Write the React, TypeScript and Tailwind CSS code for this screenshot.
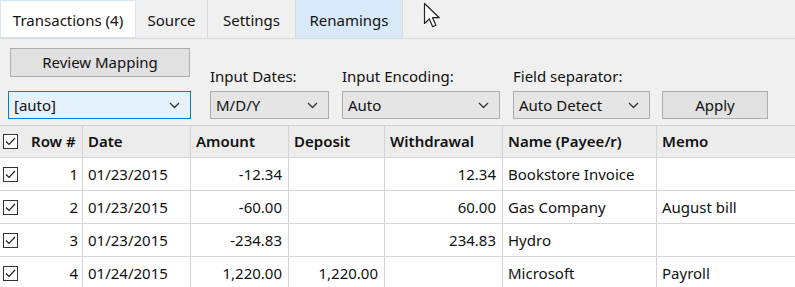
import React from "react";

const FONT = { fontFamily: '"Noto Sans", "Open Sans", Arial, sans-serif' };

const rows = [
  { n: 1, date: "01/23/2015", amount: "-12.34", deposit: "", withdrawal: "12.34", name: "Bookstore Invoice", memo: "" },
  { n: 2, date: "01/23/2015", amount: "-60.00", deposit: "", withdrawal: "60.00", name: "Gas Company", memo: "August bill" },
  { n: 3, date: "01/23/2015", amount: "-234.83", deposit: "", withdrawal: "234.83", name: "Hydro", memo: "" },
  { n: 4, date: "01/24/2015", amount: "1,220.00", deposit: "1,220.00", withdrawal: "", name: "Microsoft", memo: "Payroll" },
];

// Column widths
const COLS = "grid-cols-[83px_108px_98px_96px_118px_154px_1fr]";

const Chevron = () => (
  <svg width="11" height="7" viewBox="0 0 11 7" className="shrink-0">
    <path d="M1 1l4.5 4.5L10 1" fill="none" stroke="#333" strokeWidth="1.3" />
  </svg>
);

const Check = () => (
  <svg width="15" height="15" viewBox="0 0 15 15" className="shrink-0">
    <rect x="0.5" y="0.5" width="14" height="14" fill="#fff" stroke="#333" />
    <path d="M3 7.5l3 3 6-6.5" fill="none" stroke="#222" strokeWidth="1.2" />
  </svg>
);

const Select = ({ value, width, active }: { value: string; width: string; active?: boolean }) => (
  <div
    className={`flex items-center justify-between h-[28px] pl-[5px] pr-[10px] border text-[15px] text-[#111] ${width} ${
      active ? "bg-[#e5f1fb] border-[#0078d7]" : "bg-[#e5e5e5] border-[#acacac]"
    }`}
  >
    <span>{value}</span>
    <Chevron />
  </div>
);

const Field = ({ label, value, width }: { label: string; value: string; width: string }) => (
  <div className="flex flex-col">
    <span className="text-[15px] text-[#111] leading-[20px] mb-[5px]">{label}</span>
    <Select value={value} width={width} />
  </div>
);

const Tab = ({ label, width, kind }: { label: string; width: string; kind: "active" | "plain" | "hover" }) => (
  <div
    className={`h-full flex items-center justify-center whitespace-nowrap text-[15px] text-[#111] pt-[2px] ${width} ${
      kind === "active"
        ? "bg-white border border-[#d9e6f2]"
        : kind === "hover"
        ? "bg-[#d8eaf9] border-r border-[#dadada]"
        : "bg-[#f0f0f0] border-r border-[#dadada]"
    }`}
  >
    {label}
  </div>
);

export default function App() {
  return (
    <div className="relative w-[795px] h-[287px] overflow-hidden bg-[#f0f0f0]" style={FONT}>
      {/* Tab strip */}
      <div className="flex h-[39px] border-b border-[#d9d9d9]">
        <Tab label="Transactions (4)" width="w-[136px]" kind="active" />
        <Tab label="Source" width="w-[72px]" kind="plain" />
        <Tab label="Settings" width="w-[88px]" kind="plain" />
        <Tab label="Renamings" width="w-[107px]" kind="hover" />
      </div>

      {/* Controls */}
      <div className="flex items-end gap-[13px] pl-[8px] pt-[8px] h-[80px]">
        <div className="flex flex-col gap-[14px] w-[183px]">
          <div className="ml-[2px] w-[180px] h-[29px] flex items-center justify-center bg-[#e1e1e1] border border-[#adadad] text-[15px] text-[#111]">
            Review Mapping
          </div>
          <Select value="[auto]" width="w-[183px]" active />
        </div>
        <div className="ml-[6px]">
          <Field label="Input Dates:" value="M/D/Y" width="w-[119px]" />
        </div>
        <Field label="Input Encoding:" value="Auto" width="w-[158px]" />
        <Field label="Field separator:" value="Auto Detect" width="w-[137px]" />
        <div className="w-[106px] h-[28px] flex items-center justify-center bg-[#e1e1e1] border border-[#adadad] text-[15px] text-[#111] -ml-[1px]">
          Apply
        </div>
      </div>

      {/* Grid */}
      <div className="mt-[6px] bg-white">
        <div className={`grid ${COLS} h-[33px] bg-[#ececec] border-y border-[#d4d4d4] font-semibold text-[15px] text-[#111]`}>
          <div className="flex items-center pl-[3px] gap-[13px] border-r border-[#d4d4d4]">
            <Check />
            <span>Row #</span>
          </div>
          <div className="flex items-center pl-[5px] border-r border-[#d4d4d4]">Date</div>
          <div className="flex items-center pl-[5px] border-r border-[#d4d4d4]">Amount</div>
          <div className="flex items-center pl-[5px] border-r border-[#d4d4d4]">Deposit</div>
          <div className="flex items-center pl-[5px] border-r border-[#d4d4d4]">Withdrawal</div>
          <div className="flex items-center pl-[5px] border-r border-[#d4d4d4]">Name (Payee/r)</div>
          <div className="flex items-center pl-[5px]">Memo</div>
        </div>
        {rows.map((r) => (
          <div key={r.n} className={`grid ${COLS} h-[33px] border-b border-[#d4d4d4] text-[15px] text-[#111]`}>
            <div className="flex items-center justify-between pl-[3px] pr-[4px] border-r border-[#d4d4d4]">
              <Check />
              <span>{r.n}</span>
            </div>
            <div className="flex items-center pl-[5px] border-r border-[#d4d4d4]">{r.date}</div>
            <div className="flex items-center justify-end pr-[6px] border-r border-[#d4d4d4]">{r.amount}</div>
            <div className="flex items-center justify-end pr-[6px] border-r border-[#d4d4d4]">{r.deposit}</div>
            <div className="flex items-center justify-end pr-[6px] border-r border-[#d4d4d4]">{r.withdrawal}</div>
            <div className="flex items-center pl-[5px] border-r border-[#d4d4d4]">{r.name}</div>
            <div className="flex items-center pl-[5px]">{r.memo}</div>
          </div>
        ))}
      </div>

      {/* Mouse cursor */}
      <svg className="absolute left-[423px] top-[2px]" width="20" height="27" viewBox="0 0 20 27">
        <path
          d="M1.5 1.5v20l4.8-4.6 3.4 7.8 3.2-1.4-3.3-7.6h6.6z"
          fill="#fff"
          stroke="#222"
          strokeWidth="1.2"
          strokeLinejoin="round"
        />
      </svg>
    </div>
  );
}
